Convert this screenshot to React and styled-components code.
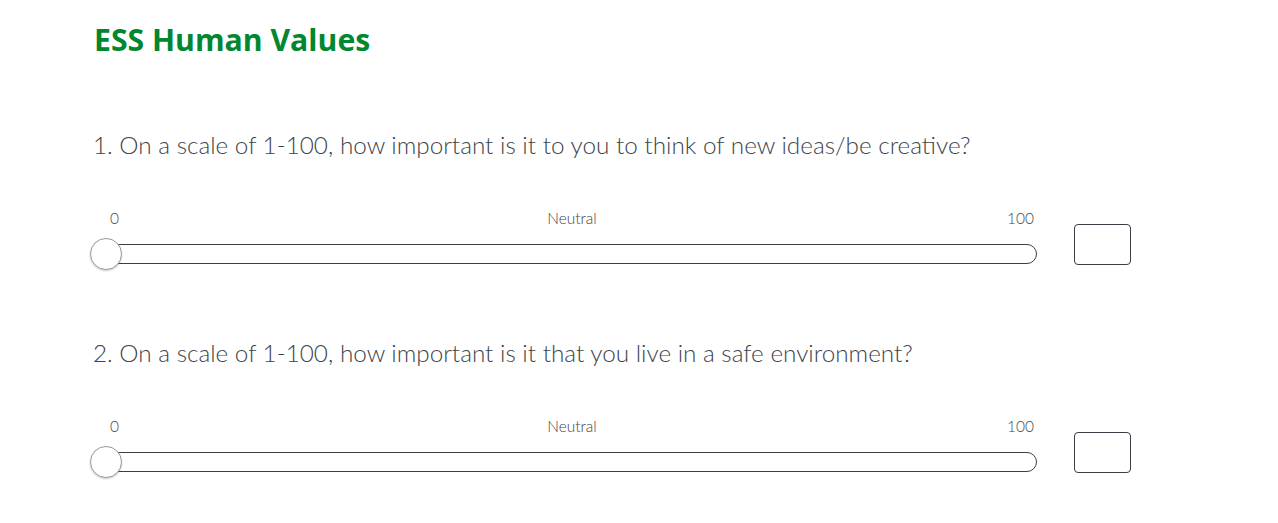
import React from "react";
import styled, { createGlobalStyle } from "styled-components";

const Global = createGlobalStyle`
  html, body { margin: 0; padding: 0; background: #ffffff; }
  body { font-family: Lato, "Open Sans", Arial, sans-serif; }
`;

const Page = styled.div`
  padding: 22px 0 50px 93px;
  width: 1278px;
  min-height: 523px;
  box-sizing: border-box;
`;

const Title = styled.h1`
  margin: 0 0 0 1px;
  font-family: "Open Sans", Arial, sans-serif;
  font-weight: 700;
  font-size: 30.2px;
  line-height: 36px;
  color: #00872f;
`;

const Question = styled.section`
  margin-top: ${(p) => p.$top}px;
`;

const Prompt = styled.h2`
  margin: 0;
  font-family: Lato, Arial, sans-serif;
  font-weight: 300;
  font-size: 24.3px;
  line-height: 30px;
  color: #3d434a;
`;

const Row = styled.div`
  display: flex;
  align-items: flex-start;
  margin-top: 48px;
`;

const SliderCol = styled.div`
  width: 944px;
  display: flex;
  flex-direction: column;
`;

const Labels = styled.div`
  display: grid;
  grid-template-columns: 1fr auto 1fr;
  padding: 0 3px 0 17px;
  font-family: Lato, Arial, sans-serif;
  font-weight: 300;
  font-size: 15.5px;
  line-height: 20px;
  color: #3f4449;
`;

const Label = styled.span`
  justify-self: ${(p) => p.$align};
`;

const Track = styled.div`
  position: relative;
  margin-top: 16px;
  height: 20px;
  box-sizing: border-box;
  border: 1px solid #3a3f45;
  border-radius: 10px;
`;

const Thumb = styled.div`
  position: absolute;
  left: -4px;
  top: -7px;
  width: 32px;
  height: 32px;
  box-sizing: border-box;
  border-radius: 50%;
  background: #ffffff;
  border: 1.5px solid #9b9b9b;
  box-shadow: 0 1px 2px rgba(0, 0, 0, 0.2);
`;

const ValueBox = styled.input`
  margin: 16px 0 0 37px;
  width: 57px;
  height: 41px;
  box-sizing: border-box;
  border: 1px solid #3a3f45;
  border-radius: 4px;
  background: #ffffff;
  padding: 0 6px;
  font-family: Lato, Arial, sans-serif;
  font-size: 16px;
  outline: none;
`;

const questions = [
  "1. On a scale of 1-100, how important is it to you to think of new ideas/be creative?",
  "2. On a scale of 1-100, how important is it that you live in a safe environment?",
];

export default function App() {
  return (
    <>
      <Global />
      <Page>
        <Title>ESS Human Values</Title>
        {questions.map((q, i) => (
          <Question key={i} $top={i === 0 ? 72 : 73}>
            <Prompt>{q}</Prompt>
            <Row>
              <SliderCol>
                <Labels>
                  <Label $align="start">0</Label>
                  <Label $align="center">Neutral</Label>
                  <Label $align="end">100</Label>
                </Labels>
                <Track>
                  <Thumb />
                </Track>
              </SliderCol>
              <ValueBox type="text" aria-label={`Answer ${i + 1}`} />
            </Row>
          </Question>
        ))}
      </Page>
    </>
  );
}
